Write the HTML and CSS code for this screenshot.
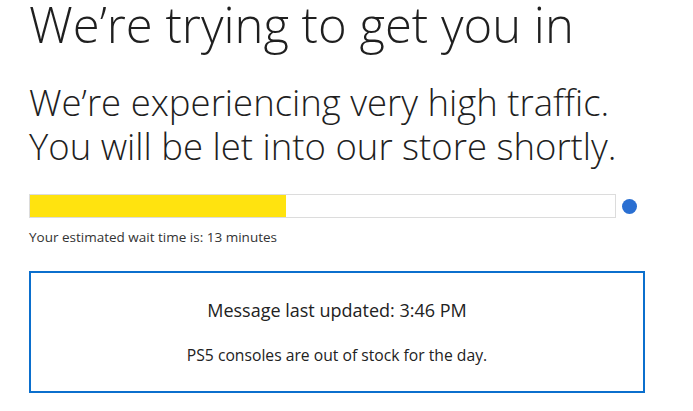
FILE: index.html
```html
<!DOCTYPE html>
<html lang="en">
<head>
<meta charset="utf-8">
<title>Queue</title>
<link rel="stylesheet" href="styles.css">
</head>
<body>
<main class="page">
  <h1 class="title">We’re trying to get you in</h1>
  <p class="subtitle">We’re experiencing very high traffic.<br>You will be let into our store shortly.</p>
  <div class="progress-row">
    <div class="bar"><div class="fill" style="width: 43.8%"></div></div>
    <span class="dot"></span>
  </div>
  <p class="wait">Your estimated wait time is: 13 minutes</p>
  <section class="message">
    <p class="updated">Message last updated: 3:46 PM</p>
    <p class="note">PS5 consoles are out of stock for the day.</p>
  </section>
</main>
</body>
</html>
```

FILE: styles.css
```css
html, body {
  margin: 0;
  padding: 0;
  background: #ffffff;
}
body {
  font-family: "Open Sans", "Noto Sans", sans-serif;
  color: #1f1f1f;
}
.page {
  padding: 0 0 0 29px;
}
.title {
  margin: 0;
  font-size: 49px;
  font-weight: 300;
  line-height: 48px;
  padding-bottom: 4px;
}
.subtitle {
  margin: 28px 0 0;
  font-size: 36.5px;
  font-weight: 300;
  line-height: 44px;
}
.progress-row {
  display: flex;
  align-items: center;
  gap: 6px;
  margin-top: 26px;
}
.bar {
  width: 585px;
  height: 22px;
  border: 1px solid #dcdcdc;
}
.fill {
  height: 100%;
  background: #ffe30f;
}
.dot {
  width: 15px;
  height: 15px;
  border-radius: 50%;
  background: #2a6fd2;
}
.wait {
  margin: 10px 0 0;
  font-size: 13.5px;
  color: #333;
}
.message {
  margin-top: 25px;
  width: 612px;
  height: 118px;
  border: 2px solid #0b6fcd;
  text-align: center;
}
.updated {
  margin: 25px 0 0;
  font-size: 18px;
  color: #222;
}
.note {
  margin: 22px 0 0;
  font-size: 15.7px;
  color: #222;
}
```
